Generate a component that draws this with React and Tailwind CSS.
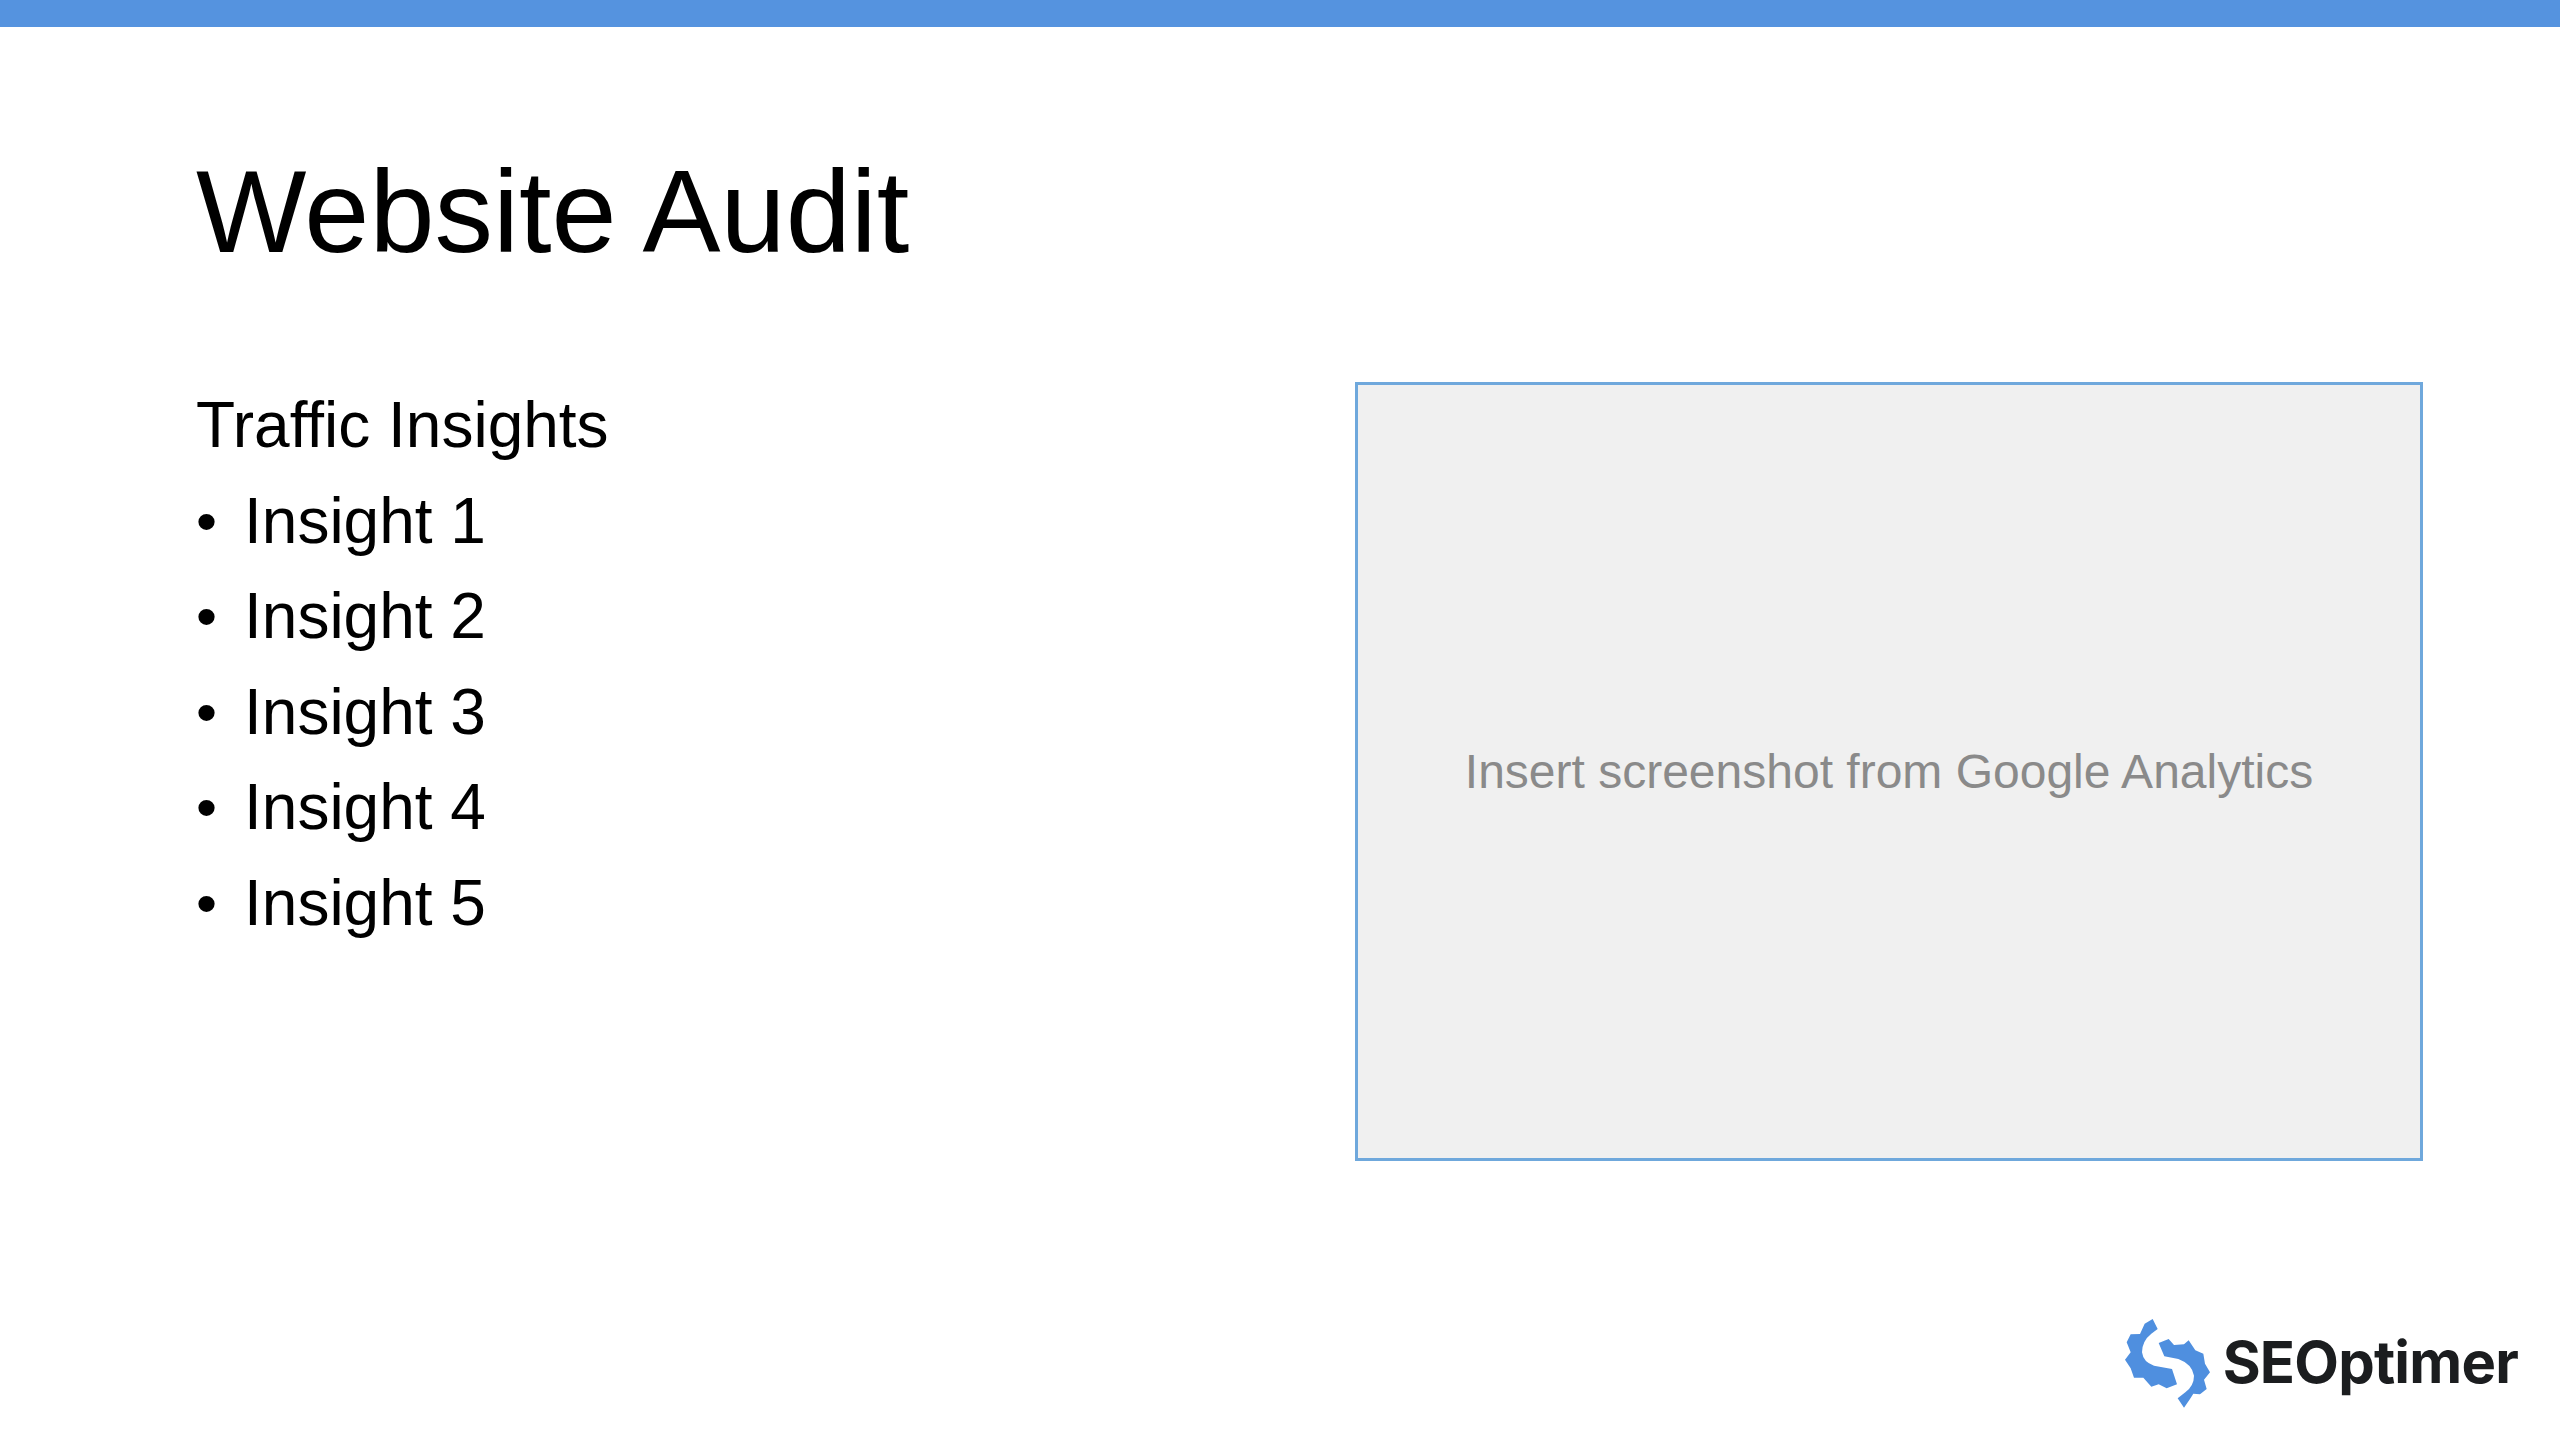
const INSIGHTS = ['Insight 1', 'Insight 2', 'Insight 3', 'Insight 4', 'Insight 5'];

function GearLogo() {
  return (
    <svg width="120" height="110" viewBox="0 0 360 330" className="shrink-0 -mr-[7px]">
      <path
        fill="#4f8fdf"
        d="M104 44 L128 30 L143 60 L124 74 Q96 96 96 130 Q100 160 132 170 L186 180 L201 226 L170 238 L146 226 L124 233 L100 206 L72 206 L62 178 L45 152 L62 130 L50 100 L62 76 L90 75 Z"
      />
      <path
        fill="#4f8fdf"
        d="M146 102 L176 90 L192 108 L222 106 L236 94 L256 124 L280 134 L285 164 L300 190 L282 212 L290 240 L270 256 L250 254 L240 270 L222 296 L203 268 L226 250 Q252 230 252 200 Q246 165 205 150 L163 142 Z"
      />
    </svg>
  );
}

export default function App() {
  return (
    <div className="flex flex-col h-[1440px] bg-white text-black font-['Liberation_Sans',Arial,sans-serif]">
      <div className="h-[27px] shrink-0 bg-[#5593df]" />

      <div className="flex-1 pl-[196px] pr-[137px]">
        <h1 className="mt-[120px] text-[117px] leading-[130px]">Website Audit</h1>

        <div className="flex justify-between items-start mt-[105px]">
          <div className="text-[64px] leading-[95.6px] mt-[-4px]">
            <div>Traffic Insights</div>
            <ul>
              {INSIGHTS.map((item) => (
                <li key={item} className="flex">
                  <span className="w-[48px] text-[60px]">•</span>
                  {item}
                </li>
              ))}
            </ul>
          </div>

          <div className="w-[1068px] h-[779px] border-[3px] border-[#6fa8dc] bg-[#f0f0f0] flex items-center justify-center">
            <span className="text-[48px] text-[#8a8a8a]">Insert screenshot from Google Analytics</span>
          </div>
        </div>
      </div>

      <div className="flex justify-end items-center pr-[42px] pb-[21px]">
        <GearLogo />
        <span className="font-['Inter',sans-serif] font-bold text-[58px] leading-[106px] pb-[4px] tracking-[-0.8px] text-[#1b1d1f]">
          SEOptimer
        </span>
      </div>
    </div>
  );
}
